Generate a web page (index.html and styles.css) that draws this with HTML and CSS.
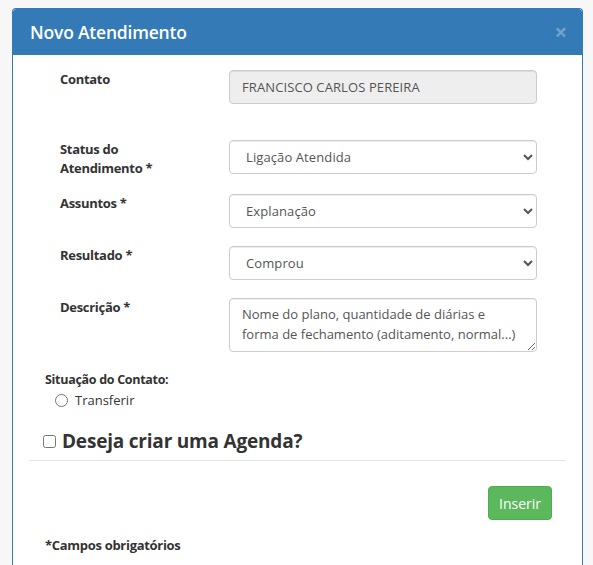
FILE: index.html
```html
<!DOCTYPE html>
<html lang="pt-BR">
<head>
<meta charset="utf-8">
<title>Novo Atendimento</title>
<link rel="stylesheet" href="styles.css">
</head>
<body>
<div class="modal">
  <div class="modal-header">
    <h4 class="modal-title">Novo Atendimento</h4>
    <span class="close">&times;</span>
  </div>
  <div class="modal-body">
    <div class="form-row row-contato">
      <label class="form-label">Contato</label>
      <input class="form-control readonly" type="text" value="FRANCISCO CARLOS PEREIRA" readonly>
    </div>
    <div class="form-row row-status">
      <label class="form-label">Status do<br>Atendimento *</label>
      <select class="form-control"><option>Ligação Atendida</option></select>
    </div>
    <div class="form-row">
      <label class="form-label">Assuntos *</label>
      <select class="form-control"><option>Explanação</option></select>
    </div>
    <div class="form-row">
      <label class="form-label">Resultado *</label>
      <select class="form-control"><option>Comprou</option></select>
    </div>
    <div class="form-row">
      <label class="form-label">Descrição *</label>
      <textarea class="form-control textarea" rows="2">Nome do plano, quantidade de diárias e
forma de fechamento (aditamento, normal...)</textarea>
    </div>

    <div class="situacao">
      <div class="situacao-title">Situação do Contato:</div>
      <label class="radio"><input type="radio" name="sit"> Transferir</label>
    </div>

    <h3 class="agenda"><input type="checkbox"> Deseja criar uma Agenda?</h3>
    <hr class="divider">

    <div class="actions">
      <button class="btn-success" type="button">Inserir</button>
    </div>

    <p class="obrigatorios">*Campos obrigatórios</p>
  </div>
</div>
</body>
</html>
```

FILE: styles.css
```css
html, body {
  margin: 0;
  padding: 0;
  background: #f7f7f7;
  height: 100%;
  overflow: hidden;
}
body {
  font-family: "Open Sans", "Noto Sans", sans-serif;
  font-size: 13px;
  color: #333;
  padding: 8px 10px 0 12px;
  box-sizing: border-box;
}
.modal {
  background: #fff;
  border: 1px solid #337ab7;
  border-bottom: none;
  border-radius: 4px 4px 0 0;
  height: 557px;
  width: 571px;
  box-sizing: border-box;
  overflow: hidden;
}
.modal-header {
  background: #337ab7;
  height: 46px;
  display: flex;
  align-items: center;
  justify-content: space-between;
  padding: 0 15px 0 17px;
  border-radius: 3px 3px 0 0;
}
.modal-title {
  margin: 0;
  color: #fff;
  font-size: 17.5px;
  font-weight: 600;
  letter-spacing: -0.2px;
}
.close {
  color: #fff;
  opacity: 0.3;
  font-size: 22px;
  font-weight: bold;
  line-height: 1;
  margin-top: -2px;
}
.modal-body {
  padding: 15px 16px 0 16px;
}
.form-row {
  display: flex;
  align-items: flex-start;
  margin-bottom: 18px;
}
.row-contato {
  margin-bottom: 36px;
}
.row-status {
  margin-bottom: 20px;
}
.form-label {
  width: 169px;
  padding-left: 31px;
  padding-top: 0;
  margin-bottom: -20px;
  font-weight: 700;
  letter-spacing: -0.3px;
  line-height: 19px;
  flex: none;
}
.form-control {
  width: 308px;
  height: 34px;
  box-sizing: border-box;
  border: 1px solid #ccc;
  border-radius: 4px;
  background: #fff;
  color: #555;
  font-family: inherit;
  font-size: 13px;
  letter-spacing: 0.1px;
  padding: 0 12px;
  box-shadow: inset 0 1px 1px rgba(0,0,0,.075);
  outline: none;
}
.readonly {
  background: #eee;
}
.textarea {
  height: 54px;
  padding: 5px 12px;
  line-height: 20px;
  letter-spacing: 0;
  resize: vertical;
  overflow: hidden;
}
.situacao {
  padding-left: 16px;
  margin-top: 7px;
}
.situacao-title {
  font-weight: 700;
  font-size: 12.5px;
  letter-spacing: -0.3px;
  line-height: 20px;
}
.radio {
  display: flex;
  align-items: center;
  padding-left: 10px;
  line-height: 21px;
}
.radio input {
  margin: 0 7px 0 0;
  width: 13px;
  height: 13px;
}
.agenda {
  margin: 16px 0 0 0;
  padding-left: 14px;
  font-size: 19px;
  font-weight: 700;
  letter-spacing: -0.2px;
  display: flex;
  align-items: center;
  line-height: 28px;
}
.agenda input {
  margin: 0 6px 0 0;
  width: 13px;
  height: 13px;
}
.divider {
  border: 0;
  border-top: 1px solid #e5e5e5;
  margin: 5px 0 0 0;
}
.actions {
  display: flex;
  justify-content: flex-end;
  padding-right: 14px;
  margin-top: 25px;
}
.btn-success {
  background: #5cb85c;
  border: 1px solid #4cae4c;
  border-radius: 4px;
  color: #fff;
  font-family: inherit;
  font-size: 14px;
  width: 64px;
  height: 34px;
  padding: 0;
}
.obrigatorios {
  margin: 16px 0 0 16px;
  font-weight: 700;
  letter-spacing: -0.3px;
}
```
